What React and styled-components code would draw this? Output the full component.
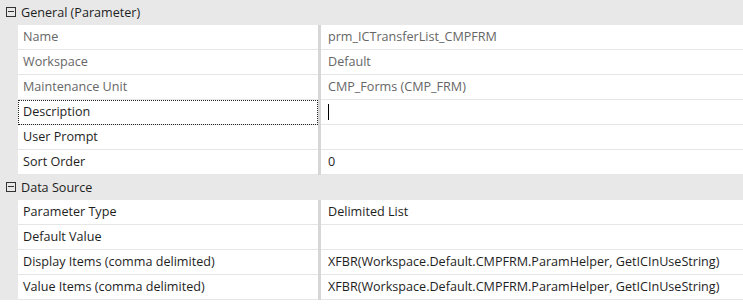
import styled, { createGlobalStyle } from "styled-components";

const GlobalStyle = createGlobalStyle`
  body{
    margin:0;
    background:#fff;
    font-family: "Open Sans", "Noto Sans", sans-serif;
  }
`;

const Grid = styled.div`
  width: 743px;
  display: flex;
  flex-direction: column;
  font-size: 12.6px;
`;

const CategoryRow = styled.div`
  display: flex;
  align-items: center;
  height: 25px;
  background: #e8e8e8;
  color: #1e1e1e;
  padding-bottom: 1px;
  box-sizing: border-box;
`;

const Toggle = styled.span`
  width: 10px;
  height: 10px;
  margin: 0 5px 0 6px;
  border: 1px solid #333;
  box-sizing: border-box;
  position: relative;
  &::after{
    content: "";
    position: absolute;
    left: 1px;
    right: 1px;
    top: 3px;
    height: 1px;
    background: #333;
  }
`;

const Row = styled.div`
  display: flex;
  height: 25px;
  background: #e8e8e8;
  padding-left: 18px;
`;

const Label = styled.div`
  width: 300px;
  box-sizing: border-box;
  display: flex;
  align-items: center;
  padding-left: 5px;
  padding-bottom: 1px;
  background: #fff;
  border-bottom: 1px solid #e6e6e6;
  color: ${p => (p.$readOnly ? "#666" : "#1e1e1e")};
  outline: ${p => (p.$focused ? "1px dotted #222" : "none")};
  outline-offset: -1px;
`;

const Splitter = styled.div`
  width: 3px;
  background: #d6d6d6;
`;

const Value = styled.div`
  flex: 1;
  display: flex;
  align-items: center;
  padding-left: 7px;
  padding-bottom: 1px;
  background: #fff;
  border-bottom: 1px solid #e6e6e6;
  color: ${p => (p.$readOnly ? "#666" : "#1e1e1e")};
  white-space: nowrap;
`;

const Caret = styled.span`
  display: inline-block;
  width: 1px;
  height: 16px;
  background: #000;
`;

const Filler = styled.div`
  height: 5px;
  background: #fff;
`;

const sections = [
  {
    title: "General (Parameter)",
    rows: [
      { label: "Name", value: "prm_ICTransferList_CMPFRM", readOnly: true },
      { label: "Workspace", value: "Default", readOnly: true },
      { label: "Maintenance Unit", value: "CMP_Forms (CMP_FRM)", readOnly: true },
      { label: "Description", value: "", focused: true },
      { label: "User Prompt", value: "" },
      { label: "Sort Order", value: "0" },
    ],
  },
  {
    title: "Data Source",
    rows: [
      { label: "Parameter Type", value: "Delimited List" },
      { label: "Default Value", value: "" },
      { label: "Display Items (comma delimited)", value: "XFBR(Workspace.Default.CMPFRM.ParamHelper, GetICInUseString)" },
      { label: "Value Items (comma delimited)", value: "XFBR(Workspace.Default.CMPFRM.ParamHelper, GetICInUseString)" },
    ],
  },
];

export default function App(){
  return(
    <>
      <GlobalStyle />
      <Grid>
        {sections.map(s => (
          <div key={s.title}>
            <CategoryRow>
              <Toggle />
              {s.title}
            </CategoryRow>
            {s.rows.map(r => (
              <Row key={r.label}>
                <Label $readOnly={r.readOnly} $focused={r.focused}>{r.label}</Label>
                <Splitter />
                <Value $readOnly={r.readOnly}>
                  {r.focused ? <Caret /> : r.value}
                </Value>
              </Row>
            ))}
          </div>
        ))}
        <Filler />
      </Grid>
    </>
  )
}
